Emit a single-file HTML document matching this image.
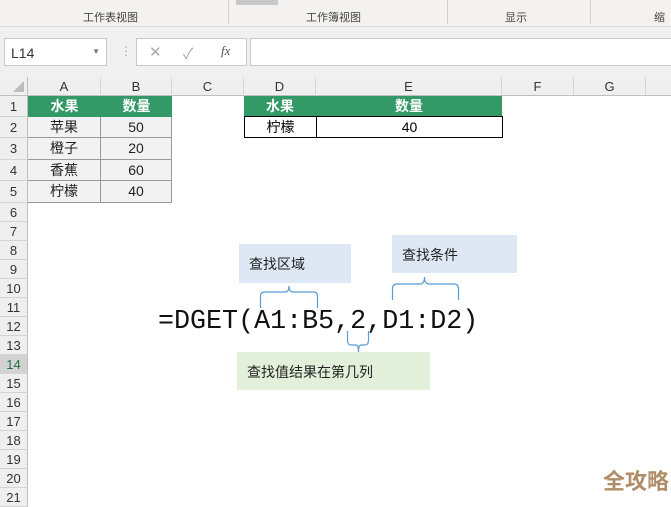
<!DOCTYPE html>
<html><head><meta charset="utf-8"><style>
*{margin:0;padding:0;box-sizing:border-box}
body{width:671px;height:497px;overflow:hidden;background:#fff;font-family:"Liberation Sans","Noto Sans CJK SC",sans-serif;position:relative}
.a{position:absolute}
.rib{left:0;top:0;width:671px;height:27px;background:#f3f2f1;border-bottom:1px solid #dadada}
.rib span{position:absolute;top:9px;font-size:11px;color:#444}
.sep{position:absolute;top:0;width:1px;height:24px;background:#d0d0d0}
.fb{left:0;top:27px;width:671px;height:50px;background:#f0f0f0}
.box{position:absolute;background:#fff;border:1px solid #c8c8c8}
.colh{top:77px;height:19px;background:#efefef;border-bottom:1px solid #bfbfbf;font-size:13px;text-align:center;line-height:19px;color:#333;border-right:1px solid #d4d4d4}
.rowh{left:0;width:28px;background:#efefef;border-right:1px solid #bfbfbf;border-bottom:1px solid #d4d4d4;font-size:13px;text-align:center;color:#333}
.c{position:absolute;text-align:center;font-size:14px}
.g{background:#339966;color:#fff;font-weight:bold}
.d{background:#f2f2f2;border-right:1px solid #999;border-bottom:1px solid #999;color:#222}
.lab{position:absolute;font-size:14px;color:#222}
</style></head><body>
<div class="a rib">
<span style="left:83px">工作表视图</span>
<span style="left:306px">工作簿视图</span>
<span style="left:505px">显示</span>
<span style="left:654px">缩放</span>
<div class="sep" style="left:228px"></div><div class="sep" style="left:447px"></div><div class="sep" style="left:590px"></div>
<div style="position:absolute;left:236px;top:0;width:42px;height:5px;background:#c8c8c8"></div>
</div>
<div class="a fb"></div>
<div class="box" style="left:4px;top:38px;width:103px;height:28px"><span style="position:absolute;left:6px;top:6px;font-size:14px;color:#333">L14</span><span style="position:absolute;right:6px;top:8px;font-size:8px;color:#777">▼</span></div>
<div class="a" style="left:120px;top:44px;font-size:12px;color:#aaa">⋮</div>
<div class="box" style="left:136px;top:38px;width:111px;height:28px;color:#aaa;font-size:15px"><span style="position:absolute;left:12px;top:4px">✕</span><span style="position:absolute;left:46px;top:4px">✓</span><span style="position:absolute;left:84px;top:4px;font-family:'Liberation Serif',serif;font-style:italic;color:#555;font-size:13px">fx</span></div>
<div class="box" style="left:250px;top:38px;width:430px;height:28px"></div>
<div class="a" style="left:0;top:77px;width:28px;height:19px;background:#efefef;border-right:1px solid #bfbfbf;border-bottom:1px solid #bfbfbf"><div style="position:absolute;right:3px;bottom:3px;width:0;height:0;border-left:11px solid transparent;border-bottom:11px solid #bcbcbc"></div></div>
<div class="a colh" style="left:28px;width:73px">A</div>
<div class="a colh" style="left:101px;width:71px">B</div>
<div class="a colh" style="left:172px;width:72px">C</div>
<div class="a colh" style="left:244px;width:72px">D</div>
<div class="a colh" style="left:316px;width:186px">E</div>
<div class="a colh" style="left:502px;width:72px">F</div>
<div class="a colh" style="left:574px;width:72px">G</div>
<div class="a colh" style="left:646px;width:30px"></div>
<div id="rows"></div>
<div class="c g" style="left:28px;top:96px;width:73px;height:21px;line-height:21px">水果</div>
<div class="c g" style="left:101px;top:96px;width:71px;height:21px;line-height:21px">数量</div>
<div class="c d" style="left:28px;top:117px;width:73px;height:21px;line-height:20px">苹果</div>
<div class="c d" style="left:101px;top:117px;width:71px;height:21px;line-height:20px">50</div>
<div class="c d" style="left:28px;top:138px;width:73px;height:22px;line-height:21px">橙子</div>
<div class="c d" style="left:101px;top:138px;width:71px;height:22px;line-height:21px">20</div>
<div class="c d" style="left:28px;top:160px;width:73px;height:21px;line-height:20px">香蕉</div>
<div class="c d" style="left:101px;top:160px;width:71px;height:21px;line-height:20px">60</div>
<div class="c d" style="left:28px;top:181px;width:73px;height:22px;line-height:21px">柠檬</div>
<div class="c d" style="left:101px;top:181px;width:71px;height:22px;line-height:21px">40</div>
<div class="c g" style="left:244px;top:96px;width:72px;height:21px;line-height:21px">水果</div>
<div class="c g" style="left:316px;top:96px;width:186px;height:21px;line-height:21px">数量</div>
<div class="c" style="left:244px;top:116px;width:73px;height:22px;line-height:20px;border:1px solid #000">柠檬</div>
<div class="c" style="left:316px;top:116px;width:187px;height:22px;line-height:20px;border:1px solid #000">40</div>
<div class="a" style="left:239px;top:244px;width:112px;height:39px;background:#dde8f4"></div>
<div class="lab" style="left:249px;top:254px">查找区域</div>
<div class="a" style="left:392px;top:235px;width:125px;height:38px;background:#dde8f4"></div>
<div class="lab" style="left:402px;top:245px">查找条件</div>
<div class="a" style="left:237px;top:352px;width:193px;height:38px;background:#e2efda"></div>
<div class="lab" style="left:247px;top:362px">查找值结果在第几列</div>
<div class="a" style="left:158px;top:306px;font-family:'Liberation Mono',monospace;font-size:26.7px;line-height:32px;color:#111;white-space:pre">=DGET(A1:B5,2,D1:D2)</div>
<svg class="a" style="left:0;top:0" width="671" height="497"><g fill="none" stroke="#5b9bd5" stroke-width="1.2">
<path d="M260.5 308 V296 Q260.5 292 265 292 H285 Q289 292 289 286 Q289 292 293 292 H313 Q317.5 292 317.5 296 V308"/>
<path d="M392.5 300 V289 Q392.5 284 397 284 H420 Q424.5 284 424.5 277 Q424.5 284 429 284 H454 Q458.5 284 458.5 289 V300"/>
<path d="M347.5 331 V340 Q347.5 345 351 345 H356 Q358.5 345 358.5 352 Q358.5 345 361 345 H365 Q368.5 345 368.5 340 V331"/>
</g></svg>
<div class="a" style="left:603px;top:464px;font-size:22px;font-weight:bold;color:#b08d68">全攻略</div>
<script>
var h='',tops=[96,117,138,160,181,203];for(var i=7;i<=22;i++)tops.push(203+(i-6)*19);
for(var i=0;i<21;i++){var t=tops[i],hh=tops[i+1]-t;h+='<div class="a rowh" style="top:'+t+'px;height:'+hh+'px;line-height:'+hh+'px'+(i==13?';color:#217346;background:#d2d2d2':'')+'">'+(i+1)+'</div>';}
document.getElementById('rows').innerHTML=h;
</script>
</body></html>
